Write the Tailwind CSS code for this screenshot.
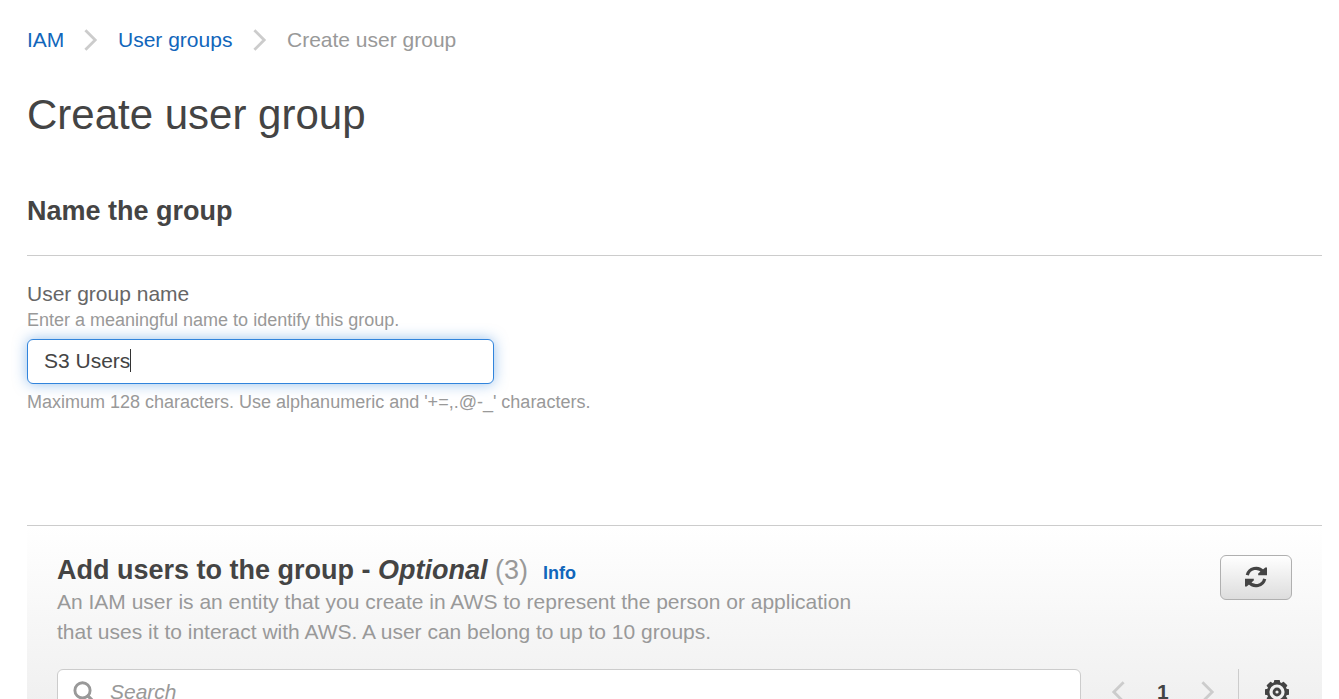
<!DOCTYPE html>
<html lang="en">
<head>
<meta charset="utf-8">
<title>Create user group</title>
<script src="https://cdn.jsdelivr.net/npm/@tailwindcss/browser@4"></script>
</head>
<body class="h-[699px] overflow-hidden bg-white font-['Liberation_Sans',Arial,sans-serif] text-[21px] text-[#444]">
<main class="flex h-[699px] flex-col overflow-hidden pl-[27px] pr-[17px]">
  <nav class="mt-[25px] flex h-[30px] shrink-0 items-center leading-[30px] text-[#999]">
    <a class="w-[57px] text-[#1166bb]">IAM</a>
    <svg class="mr-[20px] h-[22px] w-[14px]" viewBox="0 0 14 22" fill="none" stroke="#ccc" stroke-width="2.8"><path d="M1.4 1.2 11.2 11 1.4 20.8"/></svg>
    <a class="w-[135px] text-[#1166bb]">User groups</a>
    <svg class="mr-[20px] h-[22px] w-[14px]" viewBox="0 0 14 22" fill="none" stroke="#ccc" stroke-width="2.8"><path d="M1.4 1.2 11.2 11 1.4 20.8"/></svg>
    <span>Create user group</span>
  </nav>
  <h1 class="mt-[30px] shrink-0 text-[42px] leading-[60px]">Create user group</h1>
  <section class="h-[380px] shrink-0">
    <h2 class="h-[111px] border-b border-[#ccc] pt-[46px] text-[27px] leading-[40px] font-bold">Name the group</h2>
    <div class="flex flex-col pt-[24px]">
      <label for="name" class="leading-[28px] text-[#666]">User group name</label>
      <p class="text-[18px] leading-[24px] text-[#999]">Enter a meaningful name to identify this group.</p>
      <div id="name" class="mt-[7px] flex h-[45px] w-[467px] items-center rounded-[6px] border border-[#3184dc] bg-white pb-[2px] pl-[16px] shadow-[0_0_14px_rgba(49,132,220,0.5)]">
        <span>S3 Users</span><span class="h-[23px] w-px bg-[#333]"></span>
      </div>
      <p class="mt-[6px] text-[18px] leading-[24px] text-[#999]">Maximum 128 characters. Use alphanumeric and '+=,.@-_' characters.</p>
    </div>
  </section>
  <section class="flex h-[230px] shrink-0 flex-col border-t border-[#ccc] bg-linear-to-b from-white to-[#eee] to-[200px] px-[30px]">
    <header class="flex h-[143px] shrink-0 items-start justify-between pt-[29px]">
      <div>
        <h2 class="flex h-[32px] items-baseline text-[27px] leading-[30px] font-bold whitespace-pre"><span>Add users to the group - <i>Optional</i></span><span class="font-normal text-[#999]"> (3)</span><a class="ml-[15px] text-[18px] text-[#1166bb]">Info</a></h2>
        <p class="w-[820px] leading-[30px] text-[#999]">An IAM user is an entity that you create in AWS to represent the person or application<br>that uses it to interact with AWS. A user can belong to up to 10 groups.</p>
      </div>
      <button class="flex h-[45px] w-[72px] items-center justify-center rounded-[6px] border border-[#b0b0b0] bg-linear-to-b from-white to-[#ddd]">
        <svg class="mb-px h-[22px] w-[22px]" viewBox="0 0 22 22" fill="none" stroke="#444" stroke-width="3.2"><path d="M2.3 9.2A8.9 8.9 0 0 1 18 5.8"/><path d="M19.7 12.8A8.9 8.9 0 0 1 4 16.2"/><path d="M22 1.5V9.2H13.2V7.5L20.3 1.5ZM0 20.5V12.8H8.8V14.5L1.7 20.5Z" fill="#444" stroke="none"/></svg>
      </button>
    </header>
    <div class="flex h-[45px] shrink-0 items-center">
      <div class="flex h-[45px] w-[1024px] shrink-0 items-center rounded-[6px] border border-[#ccc] bg-white pl-[15px]">
        <svg class="h-[22px] w-[22px]" viewBox="0 0 22 22" fill="none" stroke="#999"><circle cx="9.5" cy="9.4" r="7.6" stroke-width="2.9"/><path d="m15 15 5 5" stroke-width="3.2" stroke-linecap="round"/></svg>
        <span class="ml-[15px] italic text-[#999]">Search</span>
      </div>
      <svg class="ml-[30px] h-[22px] w-[14px] shrink-0" viewBox="0 0 14 22" fill="none" stroke="#ccc" stroke-width="2.8"><path d="M12.6 1.2 2.8 11l9.8 9.8"/></svg>
      <span class="ml-[32px] w-[12px] font-bold">1</span>
      <svg class="ml-[32px] h-[22px] w-[14px] shrink-0" viewBox="0 0 14 22" fill="none" stroke="#ccc" stroke-width="2.8"><path d="M1.4 1.2 11.2 11 1.4 20.8"/></svg>
      <span class="ml-[23px] h-[45px] w-px bg-[#ccc]"></span>
      <svg class="ml-[26px] h-[24px] w-[24px] shrink-0" viewBox="-12 -12 24 24" fill="none" stroke="#444"><circle r="8.9" stroke-width="2.6"/><circle r="3" stroke-width="2.8"/><g fill="#444" stroke="none"><rect id="tooth" x="-3" y="-12" width="6" height="3.4" rx=".8"/><use href="#tooth" transform="rotate(45)"/><use href="#tooth" transform="rotate(90)"/><use href="#tooth" transform="rotate(135)"/><use href="#tooth" transform="rotate(180)"/><use href="#tooth" transform="rotate(225)"/><use href="#tooth" transform="rotate(270)"/><use href="#tooth" transform="rotate(315)"/></g></svg>
    </div>
  </section>
</main>
</body>
</html>
